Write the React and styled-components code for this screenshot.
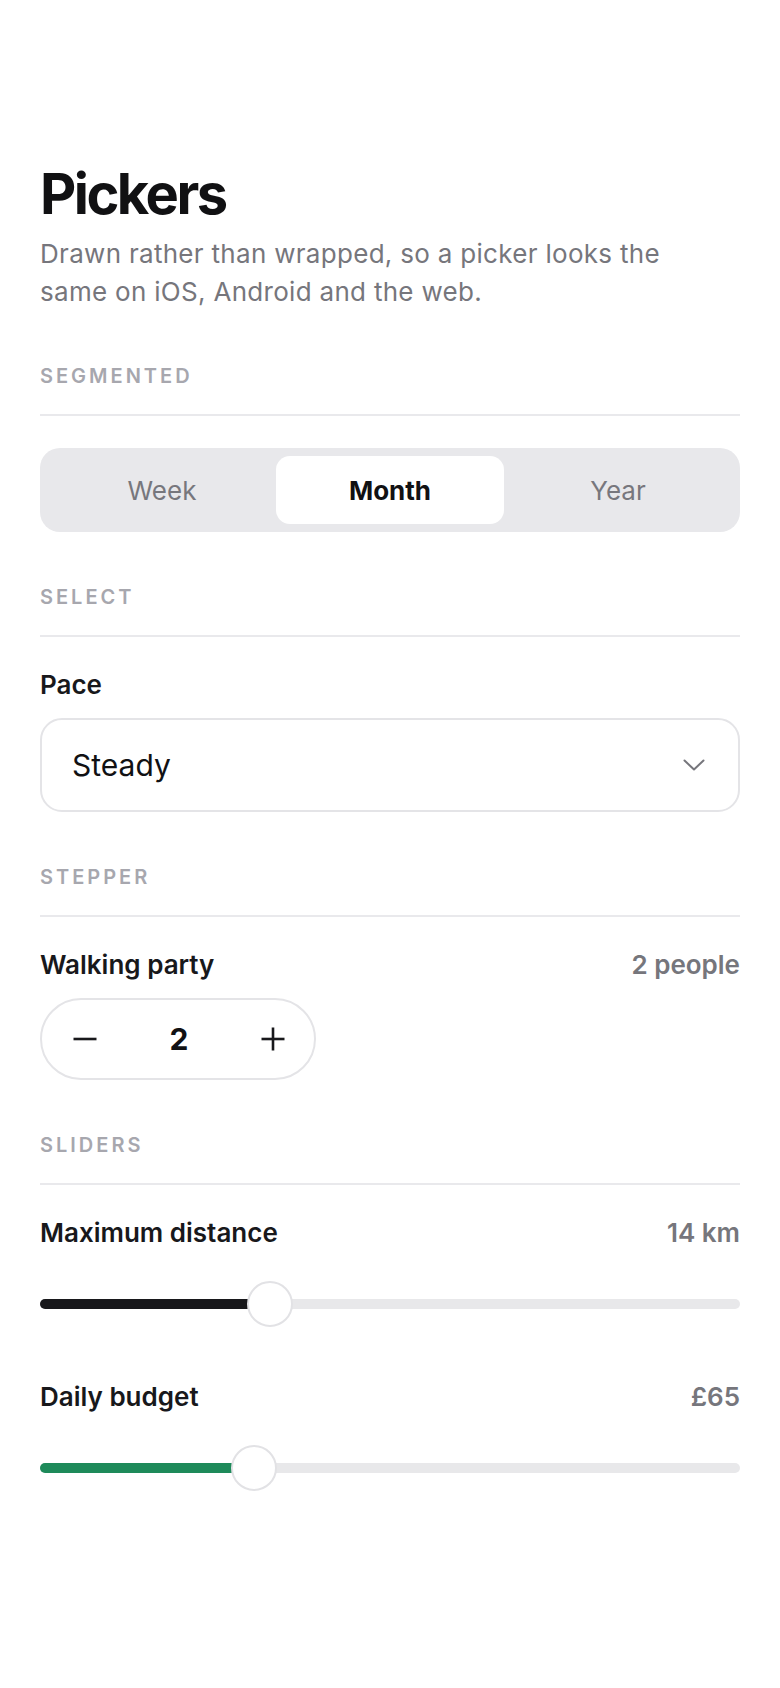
import styled, { createGlobalStyle } from "styled-components";
import { useState } from "react";

const GlobalStyle = createGlobalStyle`
  body {
    margin: 0;
    background: #ffffff;
    font-family: Inter, "Noto Sans", sans-serif;
    color: #18181b;
  }
`;

const segments = ["Week", "Month", "Year"];

const sliders = [
  { label: "Maximum distance", value: 14, min: 2, max: 40, unit: (v) => `${v} km`, color: "#18181b" },
  { label: "Daily budget", value: 65, min: 30, max: 150, unit: (v) => `£${v}`, color: "#1e8a5a" },
];

const App = () => {
  const [range, setRange] = useState("Month");
  const [party, setParty] = useState(2);

  return (
    <>
      <GlobalStyle />
      <Page>
        <Title>Pickers</Title>
        <Subtitle>
          Drawn rather than wrapped, so a picker looks the same on iOS, Android
          and the web.
        </Subtitle>

        <Section>
          <SectionLabel>Segmented</SectionLabel>
          <SectionBody>
            <Segmented>
              {segments.map((s) => (
                <Segment key={s} active={s === range} onClick={() => setRange(s)}>
                  {s}
                </Segment>
              ))}
            </Segmented>
          </SectionBody>
        </Section>

        <Section>
          <SectionLabel>Select</SectionLabel>
          <SectionBody>
            <FieldRow>
              <FieldLabel>Pace</FieldLabel>
            </FieldRow>
            <SelectBox>
              <span>Steady</span>
              <svg width="22" height="12" viewBox="0 0 22 12" fill="none">
                <polyline
                  points="1.5,1.5 11,10.5 20.5,1.5"
                  stroke="#76767c"
                  strokeWidth="2"
                  strokeLinecap="round"
                  strokeLinejoin="round"
                />
              </svg>
            </SelectBox>
          </SectionBody>
        </Section>

        <Section>
          <SectionLabel>Stepper</SectionLabel>
          <SectionBody>
            <FieldRow>
              <FieldLabel>Walking party</FieldLabel>
              <FieldValue>{party} people</FieldValue>
            </FieldRow>
            <Stepper>
              <StepButton onClick={() => setParty((p) => Math.max(1, p - 1))}>
                <svg width="24" height="24" viewBox="0 0 24 24">
                  <line x1="0.5" y1="12" x2="23.5" y2="12" stroke="#18181b" strokeWidth="2.6" />
                </svg>
              </StepButton>
              <StepValue>{party}</StepValue>
              <StepButton onClick={() => setParty((p) => p + 1)}>
                <svg width="24" height="24" viewBox="0 0 24 24">
                  <line x1="0.5" y1="12" x2="23.5" y2="12" stroke="#18181b" strokeWidth="2.6" />
                  <line x1="12" y1="0.5" x2="12" y2="23.5" stroke="#18181b" strokeWidth="2.6" />
                </svg>
              </StepButton>
            </Stepper>
          </SectionBody>
        </Section>

        <Section>
          <SectionLabel>Sliders</SectionLabel>
          <SectionBody>
            {sliders.map((s) => {
              const p = (s.value - s.min) / (s.max - s.min);
              return (
                <SliderBlock key={s.label}>
                  <FieldRow>
                    <FieldLabel>{s.label}</FieldLabel>
                    <FieldValue>{s.unit(s.value)}</FieldValue>
                  </FieldRow>
                  <SliderArea>
                    <Track>
                      <Fill color={s.color} style={{ width: `calc(23px + ${p} * (100% - 46px))` }} />
                      <Thumb style={{ left: `calc(${p} * (100% - 46px))` }} />
                    </Track>
                  </SliderArea>
                </SliderBlock>
              );
            })}
          </SectionBody>
        </Section>
      </Page>
    </>
  );
};

export default App;

const Page = styled.main`
  padding: 162px 40px 120px;
`;

const Title = styled.h1`
  margin: 0;
  font-size: 56px;
  line-height: 64px;
  font-weight: 700;
  letter-spacing: -0.045em;
  color: #111113;
`;

const Subtitle = styled.p`
  max-width: 640px;
  margin: 9px 0 0;
  font-size: 26px;
  line-height: 38px;
  letter-spacing: 0.3px;
  color: #76767c;
`;

const Section = styled.section`
  margin-top: 53px;
`;

const SectionLabel = styled.h2`
  margin: 0;
  font-size: 20px;
  line-height: 24px;
  font-weight: 600;
  letter-spacing: 0.15em;
  text-transform: uppercase;
  color: #a7a7ae;
  padding-bottom: 26px;
  border-bottom: 2px solid #e9e9ec;
`;

const SectionBody = styled.div`
  padding-top: 32px;
`;

const Segmented = styled.div`
  display: grid;
  grid-template-columns: repeat(3, 1fr);
  height: 84px;
  box-sizing: border-box;
  padding: 8px;
  border-radius: 20px;
  background: #e8e8eb;
`;

const Segment = styled.button`
  border: none;
  border-radius: 14px;
  background: ${(p) => (p.active ? "#ffffff" : "transparent")};
  font-family: inherit;
  font-size: 26px;
  font-weight: ${(p) => (p.active ? 700 : 400)};
  color: ${(p) => (p.active ? "#111113" : "#77777d")};
  cursor: pointer;
`;

const FieldRow = styled.div`
  display: flex;
  justify-content: space-between;
  align-items: center;
  margin-bottom: 17px;
`;

const FieldLabel = styled.span`
  font-size: 26px;
  line-height: 32px;
  font-weight: 600;
  color: #18181b;
`;

const FieldValue = styled.span`
  font-size: 26px;
  line-height: 32px;
  font-weight: 600;
  color: #76767c;
`;

const SelectBox = styled.div`
  display: flex;
  align-items: center;
  justify-content: space-between;
  height: 94px;
  box-sizing: border-box;
  padding: 0 33px 0 30px;
  border: 2px solid #e4e4e7;
  border-radius: 22px;
  font-size: 30px;
  color: #111113;
`;

const Stepper = styled.div`
  display: grid;
  grid-template-columns: 44px 1fr 44px;
  align-items: center;
  width: 276px;
  height: 82px;
  box-sizing: border-box;
  padding: 0 19px 0 21px;
  border: 2px solid #e4e4e7;
  border-radius: 41px;
`;

const StepButton = styled.button`
  display: flex;
  align-items: center;
  justify-content: center;
  height: 44px;
  padding: 0;
  border: none;
  background: none;
  cursor: pointer;
`;

const StepValue = styled.span`
  text-align: center;
  font-size: 30px;
  font-weight: 700;
  color: #111113;
`;

const SliderBlock = styled.div`
  & + & {
    margin-top: 54px;
  }
`;

const SliderArea = styled.div`
  display: flex;
  align-items: center;
  height: 46px;
  margin-top: 32px;
`;

const Track = styled.div`
  position: relative;
  flex: 1;
  height: 10px;
  border-radius: 5px;
  background: #e8e8ea;
`;

const Fill = styled.div`
  height: 100%;
  border-radius: 5px;
  background: ${(p) => p.color};
`;

const Thumb = styled.div`
  position: absolute;
  top: 50%;
  width: 46px;
  height: 46px;
  box-sizing: border-box;
  transform: translateY(-50%);
  border: 2px solid #e2e2e5;
  border-radius: 50%;
  background: #ffffff;
`;
